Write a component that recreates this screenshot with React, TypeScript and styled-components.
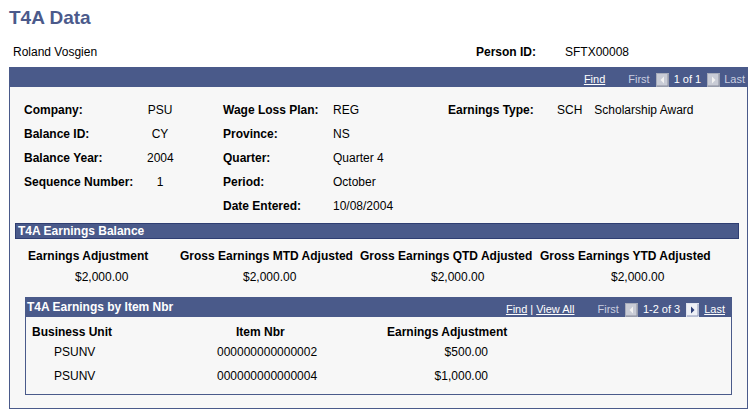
import React from "react";
import styled, { createGlobalStyle } from "styled-components";

const BLUE = "#4a5a8a";

const GlobalStyle = createGlobalStyle`
  html, body {
    margin: 0;
    padding: 0;
    background: #fff;
  }
  body {
    font-family: "Liberation Sans", Arial, sans-serif;
    font-size: 12px;
    color: #000;
  }
`;

function NavArrow({ dir, enabled }: { dir: "prev" | "next"; enabled?: boolean }) {
  const tri = dir === "prev" ? "8,3.5 8,10.5 4.5,7" : "5,3.5 5,10.5 8.5,7";
  return (
    <svg width="13" height="14" viewBox="0 0 13 14">
      <rect x="0.5" y="0.5" width="12" height="13" fill={enabled ? "#eef0f6" : "#c9ccd6"} stroke={enabled ? "#dfe3ee" : "#a6abba"} />
      <line x1="1" y1="13" x2="12" y2="13" stroke={enabled ? "#8e97b6" : "#8a8f9e"} />
      <line x1="12" y1="1" x2="12" y2="13" stroke={enabled ? "#8e97b6" : "#8a8f9e"} />
      <polygon points={tri} fill={enabled ? "#2e3f78" : "#f2f2f2"} />
    </svg>
  );
}

function Navigator({ count, viewAll, lastLink }: { count: string; viewAll?: boolean; lastLink?: boolean }) {
  return (
    <Nav>
      <NavLink>Find</NavLink>
      {viewAll && (
        <>
          <Pipe>|</Pipe>
          <NavLink>View All</NavLink>
        </>
      )}
      <NavMuted>First</NavMuted>
      <NavArrow dir="prev" />
      <NavText>{count}</NavText>
      <NavArrow dir="next" enabled={lastLink} />
      {lastLink ? <LastLink>Last</LastLink> : <LastMuted>Last</LastMuted>}
    </Nav>
  );
}

type Field = { label: string; value: string; descr?: string } | null;

const fields: Field[][] = [
  [{ label: "Company:", value: "PSU" }, { label: "Wage Loss Plan:", value: "REG" }, { label: "Earnings Type:", value: "SCH", descr: "Scholarship Award" }],
  [{ label: "Balance ID:", value: "CY" }, { label: "Province:", value: "NS" }, null],
  [{ label: "Balance Year:", value: "2004" }, { label: "Quarter:", value: "Quarter 4" }, null],
  [{ label: "Sequence Number:", value: "1" }, { label: "Period:", value: "October" }, null],
  [null, { label: "Date Entered:", value: "10/08/2004" }, null],
];

const balances = [
  { label: "Earnings Adjustment", indent: 47 },
  { label: "Gross Earnings MTD Adjusted", indent: 63 },
  { label: "Gross Earnings QTD Adjusted", indent: 71 },
  { label: "Gross Earnings YTD Adjusted", indent: 71 },
];

const items = [
  { unit: "PSUNV", nbr: "000000000000002", amount: "$500.00" },
  { unit: "PSUNV", nbr: "000000000000004", amount: "$1,000.00" },
];

export default function App() {
  return (
    <Page>
      <GlobalStyle />
      <Title>T4A Data</Title>
      <PersonRow>
        <PersonName>Roland Vosgien</PersonName>
        <PersonLabel>Person ID:</PersonLabel>
        <span>SFTX00008</span>
      </PersonRow>

      <Panel>
        <PanelBar>
          <Navigator count="1 of 1" />
        </PanelBar>

        <FieldGrid>
          {fields.map((row, r) =>
            row.map((f, c) => {
              const k = `${r}-${c}`;
              if (!f) return [<span key={k + "a"} />, <span key={k + "b"} />];
              return [
                <Label key={k + "a"}>{f.label}</Label>,
                c === 0 ? (
                  <CenterValue key={k + "b"}>{f.value}</CenterValue>
                ) : (
                  <Value key={k + "b"}>
                    {f.value}
                    {f.descr && <Descr>{f.descr}</Descr>}
                  </Value>
                ),
              ];
            })
          )}
        </FieldGrid>

        <SectionBar>T4A Earnings Balance</SectionBar>

        <BalanceRow>
          {balances.map((b) => (
            <BalanceCol key={b.label}>
              <ColHead>{b.label}</ColHead>
              <BalanceValue $indent={b.indent}>$2,000.00</BalanceValue>
            </BalanceCol>
          ))}
        </BalanceRow>

        <GridBox>
          <GridBar>
            <GridTitle>T4A Earnings by Item Nbr</GridTitle>
            <Navigator count="1-2 of 3" viewAll lastLink />
          </GridBar>
          <ItemGrid>
            <ColHead>Business Unit</ColHead>
            <ColHead style={{ paddingLeft: 19 }}>Item Nbr</ColHead>
            <ColHead>Earnings Adjustment</ColHead>
            {items.map((it, i) => (
              <React.Fragment key={i}>
                <Cell $indent={22}>{it.unit}</Cell>
                <Cell>{it.nbr}</Cell>
                <AmountCell>{it.amount}</AmountCell>
              </React.Fragment>
            ))}
          </ItemGrid>
        </GridBox>
      </Panel>
    </Page>
  );
}

const Page = styled.div`
  width: 756px;
  height: 417px;
  padding: 7px 0 0 9px;
  box-sizing: border-box;
`;

const Title = styled.h1`
  margin: 0;
  font-size: 19px;
  line-height: 22px;
  font-weight: bold;
  color: #4b5a8b;
`;

const PersonRow = styled.div`
  display: flex;
  align-items: center;
  height: 16px;
  margin-top: 15px;
  padding-left: 4px;
`;

const PersonName = styled.span`
  width: 463px;
`;

const PersonLabel = styled.span`
  font-weight: bold;
  width: 89px;
`;

const Panel = styled.div`
  margin-top: 7px;
  width: 739px;
  box-sizing: border-box;
  border: 1px solid ${BLUE};
  border-top: none;
  background: #f7f7f7;
  padding-bottom: 13px;
`;

const PanelBar = styled.div`
  height: 20px;
  margin: 0 -1px;
  background: ${BLUE};
  display: flex;
  justify-content: flex-end;
  align-items: flex-end;
  padding: 0 3px 0 0;
  box-sizing: border-box;
`;

const Nav = styled.div`
  display: flex;
  align-items: center;
  font-size: 11px;
  line-height: 15px;
  color: #fff;
`;

const NavLink = styled.a`
  color: #fff;
  text-decoration: underline;
  cursor: pointer;
`;

const Pipe = styled.span`
  margin: 0 3px;
`;

const NavMuted = styled.span`
  color: #c9cee0;
  margin-left: 23px;
  margin-right: 6px;
`;

const NavText = styled.span`
  margin: 0 6px 0 5px;
`;

const LastLink = styled(NavLink)`
  margin-left: 5px;
`;

const LastMuted = styled.span`
  color: #c9cee0;
  margin-left: 4px;
`;

const FieldGrid = styled.div`
  display: grid;
  grid-template-columns: 123px 76px 110px 115px 109px 1fr;
  grid-auto-rows: 24px;
  align-items: center;
  padding: 11px 0 0 14px;
`;

const Label = styled.span`
  font-weight: bold;
`;

const Value = styled.span`
  white-space: nowrap;
`;

const CenterValue = styled.span`
  width: 26px;
  text-align: center;
`;

const Descr = styled.span`
  margin-left: 12px;
`;

const SectionBar = styled.div`
  margin: 5px 8px 0 5px;
  height: 16px;
  box-sizing: border-box;
  background: ${BLUE};
  border: 1px solid #2f3e72;
  color: #fff;
  font-weight: bold;
  line-height: 14px;
  padding-left: 2px;
`;

const BalanceRow = styled.div`
  display: grid;
  grid-template-columns: 152px 180px 180px 1fr;
  padding: 10px 0 0 18px;
`;

const BalanceCol = styled.div`
  display: flex;
  flex-direction: column;
`;

const ColHead = styled.span`
  font-weight: bold;
  white-space: nowrap;
`;

const BalanceValue = styled.span<{ $indent: number }>`
  margin-top: 7px;
  padding-left: ${(p) => p.$indent}px;
`;

const GridBox = styled.div`
  margin: 13px 15px 0 15px;
  border: 1px solid ${BLUE};
  border-top: none;
`;

const GridBar = styled.div`
  height: 20px;
  margin: 0 -1px;
  background: ${BLUE};
  display: flex;
  justify-content: space-between;
  align-items: flex-end;
  padding: 0 7px 0 2px;
  box-sizing: border-box;
`;

const GridTitle = styled.span`
  color: #fff;
  font-weight: bold;
  align-self: center;
`;

const ItemGrid = styled.div`
  display: grid;
  grid-template-columns: 185px 170px 1fr;
  grid-template-rows: 20px 24px 24px;
  line-height: 20px;
  align-items: start;
  padding: 5px 0 4px 6px;
`;

const Cell = styled.span<{ $indent?: number }>`
  padding-left: ${(p) => p.$indent ?? 0}px;
`;

const AmountCell = styled.span`
  width: 101px;
  text-align: right;
`;
